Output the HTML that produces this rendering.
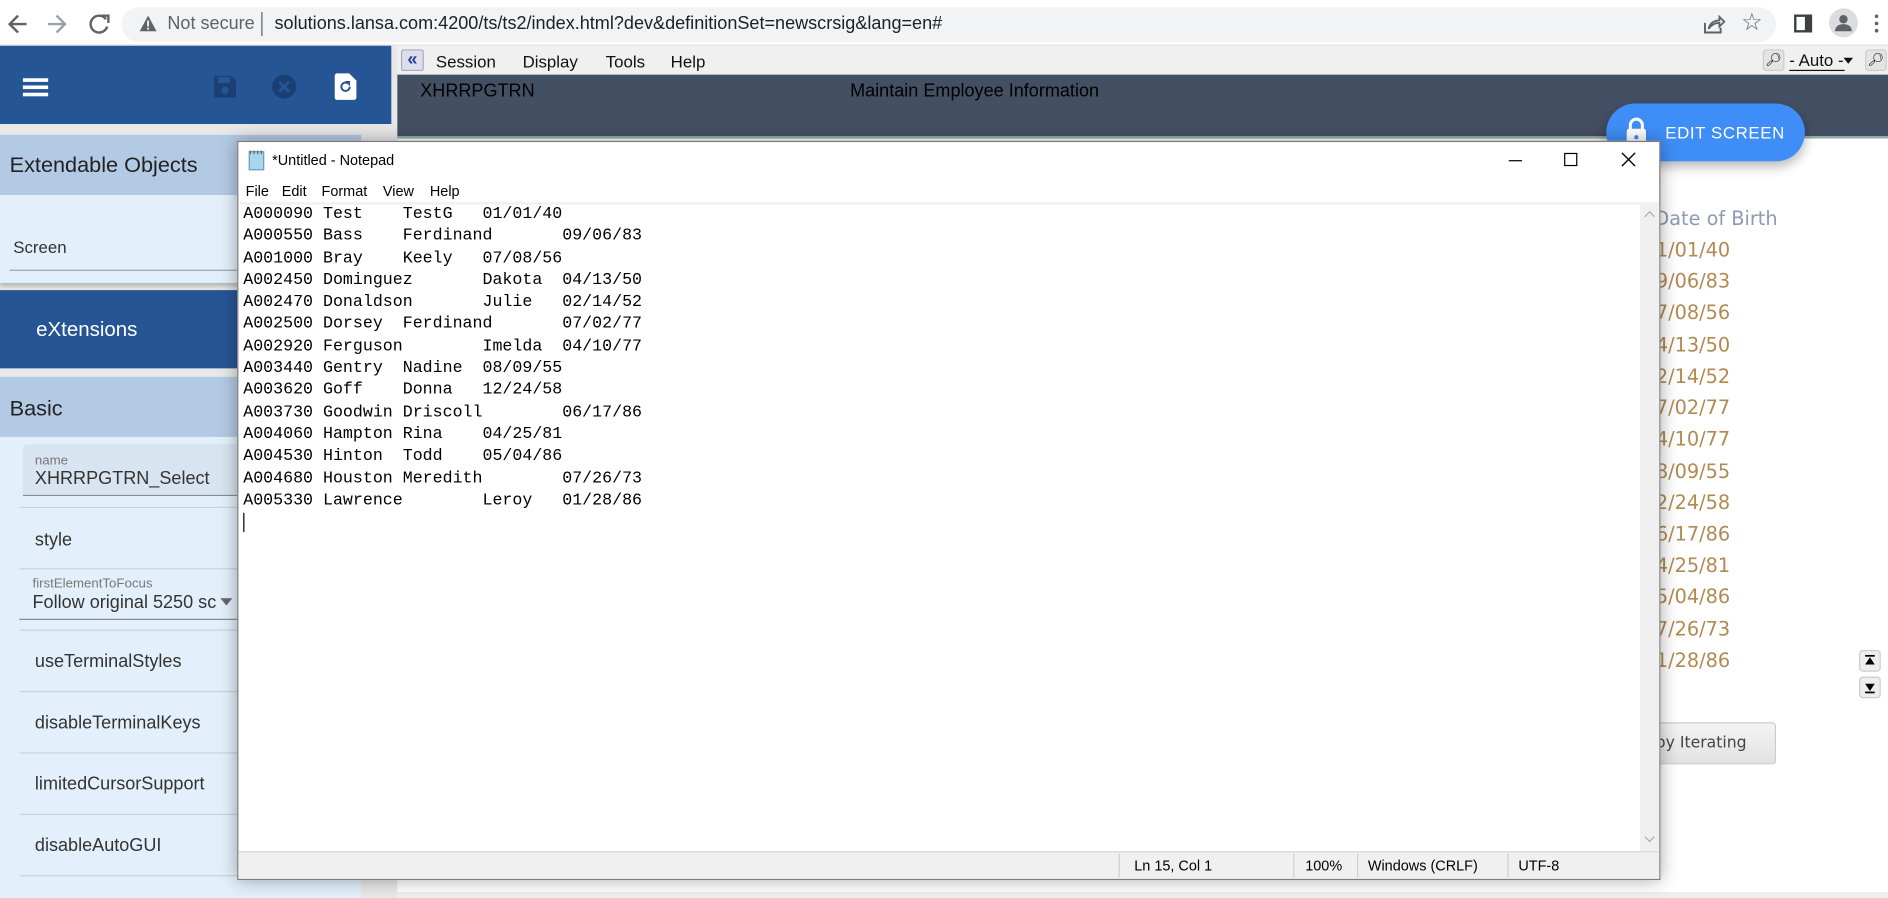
<!DOCTYPE html>
<html><head><meta charset="utf-8">
<style>
*{box-sizing:border-box;margin:0;padding:0}
html,body{width:1888px;height:898px;overflow:hidden;background:#fff}
#w{position:absolute;left:0;top:0;width:1568px;height:746px;transform:scale(1.20408,1.2038);transform-origin:0 0;font-family:"Liberation Sans",Arial,sans-serif;overflow:hidden;background:#fff}
.a{position:absolute}
.t{position:absolute;white-space:nowrap}
.lp{font-size:15px;color:#333}
.row{position:absolute;left:16px;width:284px;border-bottom:1px solid #c8d3de}
.date{position:absolute;left:1365px;font-size:16px;color:#b08a50;font-family:"DejaVu Sans",sans-serif}
</style></head><body><div id="w">
<div class="a" style="left:0;top:0;width:1568px;height:38px;background:#fff;border-bottom:1px solid #e0e0e0"></div>
<svg class="a" style="left:6px;top:10px" width="90" height="20" viewBox="0 0 90 20"><path d="M16 10H3M9 3L2 10l7 7" stroke="#5f6368" stroke-width="2" fill="none"/><path d="M34 10h13M41 3l7 7-7 7" stroke="#9aa0a6" stroke-width="2" fill="none"/><path d="M82 6a7 7 0 1 0 1 6" stroke="#5f6368" stroke-width="2" fill="none"/><path d="M78 3h6v6" stroke="#5f6368" stroke-width="2" fill="none"/></svg>
<div class="a" style="left:101px;top:6px;width:1374px;height:29px;border-radius:15px;background:#f1f3f4"></div>
<svg class="a" style="left:115px;top:12px" width="16" height="15"><path d="M8 1L15 14H1z" fill="#5f6368"/><rect x="7.2" y="5" width="1.6" height="5" fill="#f1f3f4"/><rect x="7.2" y="11" width="1.6" height="1.6" fill="#f1f3f4"/></svg>
<div class="t" style="left:139px;top:11px;font-size:15px;color:#5f6368">Not secure</div>
<div class="a" style="left:217px;top:10px;width:1px;height:20px;background:#5f6368"></div>
<div class="t" style="left:228px;top:11px;font-size:15px;color:#202124">solutions.lansa.com:4200/ts/ts2/index.html?dev&amp;definitionSet=newscrsig&amp;lang=en#</div>
<svg class="a" style="left:1413px;top:10px" width="20" height="20"><path d="M3 9v8h13v-4" stroke="#5f6368" stroke-width="1.6" fill="none"/><path d="M6 14c1-5 5-7 9-7V4l4 4-4 4V9c-4 0-7 2-9 5z" stroke="#5f6368" stroke-width="1.5" fill="none"/></svg>
<div class="t" style="left:1446px;top:6px;font-size:20px;color:#5f6368">☆</div>
<div class="a" style="left:1490px;top:12px;width:15px;height:15px;border:2px solid #3c4043;border-right-width:6px"></div>
<div class="a" style="left:1519px;top:7px;width:24px;height:24px;border-radius:50%;background:#dadce0"></div>
<svg class="a" style="left:1523px;top:11px" width="16" height="16"><circle cx="8" cy="5" r="3.5" fill="#5f6368"/><path d="M1 15c0-4 3-6 7-6s7 2 7 6z" fill="#5f6368"/></svg>
<div class="a" style="left:1557px;top:12px;width:3px;height:3px;border-radius:2px;background:#5f6368;box-shadow:0 6px 0 #5f6368,0 12px 0 #5f6368"></div>

<div class="a" style="left:0;top:38px;width:330px;height:708px;background:#e8e8e8"></div>
<div class="a" style="left:0;top:38px;width:325px;height:65px;background:#265596"></div>
<div class="a" style="left:19px;top:65px;width:21px;height:2.5px;background:#fff;box-shadow:0 6px 0 #fff,0 12px 0 #fff"></div>
<svg class="a" style="left:176px;top:61px" width="22" height="22"><path d="M2 2h14l4 4v14H2z" fill="#1b3f73"/><rect x="5" y="3" width="10" height="5" fill="#265596"/><circle cx="11" cy="14" r="3" fill="#265596"/></svg>
<svg class="a" style="left:225px;top:61px" width="22" height="22"><circle cx="11" cy="11" r="10" fill="#1b3f73"/><path d="M7 7l8 8M15 7l-8 8" stroke="#265596" stroke-width="2.4"/></svg>
<svg class="a" style="left:277px;top:60px" width="20" height="24"><path d="M1 3a2 2 0 0 1 2-2h10l6 6v14a2 2 0 0 1-2 2H3a2 2 0 0 1-2-2z" fill="#fff"/><path d="M13.5 12a3.5 3.5 0 1 1-1.2-2.6" stroke="#265596" stroke-width="1.6" fill="none"/><path d="M10 8h3v3" stroke="#265596" stroke-width="1.4" fill="none"/></svg>
<div class="a" style="left:0;top:112px;width:300px;height:50px;background:#b3cae4"></div>
<div class="t" style="left:8px;top:127px;font-size:18px;color:#222">Extendable Objects</div>
<div class="a" style="left:0;top:162px;width:300px;height:73px;background:#e3f0fb;box-shadow:0 3px 3px #bbb"></div>
<div class="t" style="left:11px;top:197px;font-size:14px;color:#333">Screen</div>
<div class="a" style="left:8px;top:224px;width:292px;height:1px;background:#9aa4ad"></div>
<div class="a" style="left:0;top:241px;width:300px;height:65px;background:#265596"></div>
<div class="t" style="left:30px;top:264px;font-size:17px;color:#fff">eXtensions</div>
<div class="a" style="left:0;top:313px;width:300px;height:50px;background:#b3cae4"></div>
<div class="t" style="left:8px;top:329px;font-size:18px;color:#222">Basic</div>
<div class="a" style="left:0;top:363px;width:300px;height:383px;background:#e3f0fb"></div>
<div class="a" style="left:19px;top:369px;width:281px;height:43px;background:#d8e5f1;border-bottom:1px solid #888;border-radius:4px 4px 0 0"></div>
<div class="t" style="left:29px;top:377px;font-size:11px;color:#777">name</div>
<div class="t lp" style="left:29px;top:389px">XHRRPGTRN_Select</div>
<div class="row" style="top:421px;height:1px"></div>
<div class="t lp" style="left:29px;top:440px">style</div>
<div class="row" style="top:472px;height:1px"></div>
<div class="t" style="left:27px;top:479px;font-size:11px;color:#777">firstElementToFocus</div>
<div class="t lp" style="left:27px;top:492px">Follow original 5250 sc</div>
<div class="a" style="left:183px;top:497px;border:5px solid transparent;border-top:6px solid #666"></div>
<div class="a" style="left:16px;top:514px;width:284px;height:1px;background:#888"></div>
<div class="row" style="top:523px;height:1px"></div>
<div class="t lp" style="left:29px;top:541px">useTerminalStyles</div>
<div class="row" style="top:574px;height:1px"></div>
<div class="t lp" style="left:29px;top:592px">disableTerminalKeys</div>
<div class="row" style="top:625px;height:1px"></div>
<div class="t lp" style="left:29px;top:643px">limitedCursorSupport</div>
<div class="row" style="top:676px;height:1px"></div>
<div class="t lp" style="left:29px;top:694px">disableAutoGUI</div>
<div class="row" style="top:727px;height:1px"></div>

<div class="a" style="left:330px;top:38px;width:1238px;height:24px;background:#f0f0f0"></div>
<div class="a" style="left:333px;top:41px;width:19px;height:18px;background:#dde;border:1px solid #aab;border-radius:2px;color:#2a3f9a;font-size:15px;font-weight:bold;line-height:15px;text-align:center">«</div>
<div class="t" style="left:362px;top:43px;font-size:14px;color:#111">Session</div>
<div class="t" style="left:434px;top:43px;font-size:14px;color:#111">Display</div>
<div class="t" style="left:503px;top:43px;font-size:14px;color:#111">Tools</div>
<div class="t" style="left:557px;top:43px;font-size:14px;color:#111">Help</div>
<div class="a" style="left:1464px;top:41px;width:18px;height:18px;background:#e4e4e4;border:1px solid #ccc;border-radius:3px;font-size:11px;text-align:center;line-height:16px">🔎︎</div>
<div class="t" style="left:1486px;top:42px;font-size:14px;color:#111;border-bottom:1px solid #111;width:46px">- Auto -</div>
<div class="a" style="left:1531px;top:48px;border:4px solid transparent;border-top:5px solid #111"></div>
<div class="a" style="left:1549px;top:41px;width:18px;height:18px;background:#e4e4e4;border:1px solid #ccc;border-radius:3px;font-size:11px;text-align:center;line-height:16px">🔎︎</div>
<div class="a" style="left:330px;top:62px;width:1238px;height:53px;background:#434f63;border-bottom:2px solid #9aa"></div>
<div class="t" style="left:349px;top:67px;font-size:15px;color:#000">XHRRPGTRN</div>
<div class="t" style="left:706px;top:67px;font-size:15px;color:#000">Maintain Employee Information</div>
<div class="a" style="left:1334px;top:86px;width:165px;height:48px;border-radius:24px;background:#3f8ef7;box-shadow:0 4px 10px rgba(0,0,0,.3)"></div>
<svg class="a" style="left:1349px;top:97px" width="20" height="24"><path d="M5 11V7a5 5 0 0 1 10 0v4" stroke="#fff" stroke-width="2.5" fill="none"/><rect x="2" y="10" width="16" height="13" rx="2" fill="#fff"/><circle cx="10" cy="17" r="1.8" fill="#3f8ef7"/></svg>
<div class="t" style="left:1383px;top:102px;font-size:14px;color:#fff;letter-spacing:.5px">EDIT SCREEN</div>
<div class="t" style="left:1374px;top:172px;font-size:16px;color:#8b9cb2;font-family:'DejaVu Sans',sans-serif">Date of Birth</div>
<div class="date" style="top:198px">01/01/40</div>
<div class="date" style="top:224px">09/06/83</div>
<div class="date" style="top:250px">07/08/56</div>
<div class="date" style="top:277px">04/13/50</div>
<div class="date" style="top:303px">02/14/52</div>
<div class="date" style="top:329px">07/02/77</div>
<div class="date" style="top:355px">04/10/77</div>
<div class="date" style="top:382px">08/09/55</div>
<div class="date" style="top:408px">12/24/58</div>
<div class="date" style="top:434px">06/17/86</div>
<div class="date" style="top:460px">04/25/81</div>
<div class="date" style="top:486px">05/04/86</div>
<div class="date" style="top:513px">07/26/73</div>
<div class="date" style="top:539px">01/28/86</div>
<div class="a" style="left:1544px;top:540px;width:18px;height:18px;background:#eee;border:1px solid #ccc;border-radius:3px"></div>
<svg class="a" style="left:1548px;top:544px" width="10" height="10"><rect x="1" y="0" width="8" height="1.5"/><path d="M5 2l4 6H1z"/></svg>
<div class="a" style="left:1544px;top:562px;width:18px;height:18px;background:#eee;border:1px solid #ccc;border-radius:3px"></div>
<svg class="a" style="left:1548px;top:566px" width="10" height="10"><path d="M5 8L1 2h8z"/><rect x="1" y="8.5" width="8" height="1.5"/></svg>
<div class="a" style="left:1330px;top:600px;width:145px;height:35px;border:1px solid #ccc;border-radius:3px;background:linear-gradient(#f4f4f4,#e2e2e2)"></div>
<div class="t" style="left:1358px;top:610px;font-size:13px;color:#444;font-family:'DejaVu Sans',sans-serif">Copy Iterating</div>
<div class="a" style="left:330px;top:741px;width:1238px;height:5px;background:#eee"></div>

<div class="a" style="left:197px;top:117px;width:1182px;height:614px;background:#fff;border:1px solid #7a7a7a;box-shadow:0 0 14px rgba(0,0,0,.35)"></div>
<svg class="a" style="left:205px;top:124px" width="16" height="18"><rect x="2" y="2" width="12" height="15" fill="#a8d4ee" stroke="#6a9ab8"/><path d="M3 1v3M6 1v3M9 1v3M12 1v3" stroke="#666"/></svg>
<div class="t" style="left:226px;top:126px;font-size:12px;color:#000">*Untitled - Notepad</div>
<div class="a" style="left:1253px;top:133px;width:11px;height:1px;background:#000"></div>
<div class="a" style="left:1299px;top:127px;width:11px;height:11px;border:1px solid #000"></div>
<svg class="a" style="left:1346px;top:126px" width="13" height="13"><path d="M1 1l11 11M12 1L1 12" stroke="#000" stroke-width="1.1"/></svg>
<div class="t" style="left:204px;top:152px;font-size:12px;color:#000">File</div>
<div class="t" style="left:234px;top:152px;font-size:12px;color:#000">Edit</div>
<div class="t" style="left:267px;top:152px;font-size:12px;color:#000">Format</div>
<div class="t" style="left:318px;top:152px;font-size:12px;color:#000">View</div>
<div class="t" style="left:357px;top:152px;font-size:12px;color:#000">Help</div>
<div class="a" style="left:198px;top:168px;width:1180px;height:2px;background:#f0f0f0"></div>
<pre class="a" style="left:202px;top:170px;font-family:'Liberation Mono',monospace;font-size:13.8px;line-height:18.3px;color:#000;tab-size:8;-moz-tab-size:8">A000090	Test	TestG	01/01/40
A000550	Bass	Ferdinand	09/06/83
A001000	Bray	Keely	07/08/56
A002450	Dominguez	Dakota	04/13/50
A002470	Donaldson	Julie	02/14/52
A002500	Dorsey	Ferdinand	07/02/77
A002920	Ferguson	Imelda	04/10/77
A003440	Gentry	Nadine	08/09/55
A003620	Goff	Donna	12/24/58
A003730	Goodwin	Driscoll	06/17/86
A004060	Hampton	Rina	04/25/81
A004530	Hinton	Todd	05/04/86
A004680	Houston	Meredith	07/26/73
A005330	Lawrence	Leroy	01/28/86
</pre>
<div class="a" style="left:202px;top:426px;width:1px;height:16px;background:#000"></div>
<div class="a" style="left:1362px;top:170px;width:16px;height:537px;background:#f0f0f0"></div>
<svg class="a" style="left:1365px;top:174px" width="10" height="8"><path d="M1 6l4-4 4 4" stroke="#aaa" fill="none"/></svg>
<svg class="a" style="left:1365px;top:693px" width="10" height="8"><path d="M1 2l4 4 4-4" stroke="#aaa" fill="none"/></svg>
<div class="a" style="left:198px;top:707px;width:1180px;height:23px;background:#f0f0f0;border-top:1px solid #d8d8d8"></div>
<div class="a" style="left:929px;top:709px;width:1px;height:20px;background:#d0d0d0"></div>
<div class="a" style="left:1074px;top:709px;width:1px;height:20px;background:#d0d0d0"></div>
<div class="a" style="left:1127px;top:709px;width:1px;height:20px;background:#d0d0d0"></div>
<div class="a" style="left:1252px;top:709px;width:1px;height:20px;background:#d0d0d0"></div>
<div class="t" style="left:942px;top:712px;font-size:12px">Ln 15, Col 1</div>
<div class="t" style="left:1084px;top:712px;font-size:12px">100%</div>
<div class="t" style="left:1136px;top:712px;font-size:12px">Windows (CRLF)</div>
<div class="t" style="left:1261px;top:712px;font-size:12px">UTF-8</div>
</div></body></html>
